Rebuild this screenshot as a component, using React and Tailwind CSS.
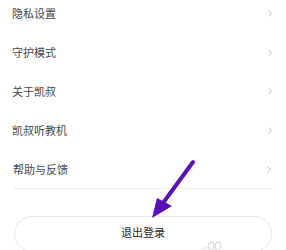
export default function App() {
  const items = ["隐私设置", "守护模式", "关于凯叔", "凯叔听教机", "帮助与反馈"];
  return (
    <div className="relative w-[286px] h-[250px] overflow-hidden bg-white" style={{ fontFamily: '"Noto Sans CJK SC", "Noto Sans", sans-serif' }}>
      <div className="-mt-[6px] px-[12px]">
        {items.map((t, i) => (
          <div key={i} className={`flex items-center justify-between h-[39px] ${i === items.length - 1 ? "border-b border-[#efefef] mx-[1px] pl-0" : ""}`}>
            <span className="text-[11px] text-[#474747] leading-none">{t}</span>
            <svg width="6" height="9" viewBox="0 0 6 9" className="mr-[1px]">
              <polyline points="1.5,1.5 4.5,4.5 1.5,7.5" fill="none" stroke="#bdbdbd" strokeWidth="1" />
            </svg>
          </div>
        ))}
      </div>
      <div className="mt-[27px] mx-[14px] h-[36px] rounded-[18px] border border-[#e8e8e8] flex items-center justify-center">
        <span className="text-[11px] text-[#2a2a2a] leading-none -mt-[3px]">退出登录</span>
      </div>
      <svg className="absolute left-0 top-0" width="286" height="250" viewBox="0 0 286 250">
        <g stroke="#ffffff" strokeWidth="2" strokeLinejoin="round" opacity="0.9">
          <line x1="193" y1="162" x2="163" y2="203" strokeWidth="7" strokeLinecap="round" />
          <polygon points="152,218 156,197 173,206" fill="#ffffff" strokeWidth="3" />
        </g>
        <line x1="193" y1="162" x2="163" y2="203" stroke="#5a12b8" strokeWidth="4" strokeLinecap="round" />
        <polygon points="152,218 157,198 172,206" fill="#5a12b8" />
        <g fill="none" stroke="#d4d4d4" strokeWidth="1">
          <ellipse cx="211" cy="246" rx="3" ry="4" />
          <ellipse cx="218" cy="246" rx="3" ry="4" />
          <line x1="203" y1="248" x2="207" y2="248" />
        </g>
      </svg>
    </div>
  );
}
